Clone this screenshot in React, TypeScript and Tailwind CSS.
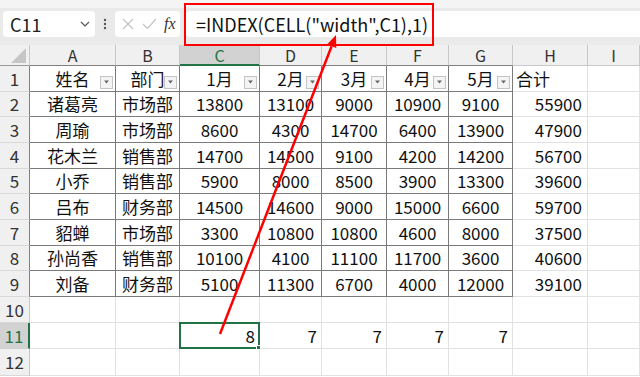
import React from 'react';

const font = { fontFamily: '"Noto Sans CJK SC", "Noto Sans", sans-serif' };

const cols = ['A', 'B', 'C', 'D', 'E', 'F', 'G', 'H', 'I'];
const colWidths = ['w-[86px]', 'w-[64px]', 'w-[80px]', 'w-[62px]', 'w-[65px]', 'w-[62px]', 'w-[64px]', 'w-[75px]', 'flex-1'];

const headerRow = ['姓名', '部门', '1月', '2月', '3月', '4月', '5月', '合计', ''];

const rows: (string | number)[][] = [
  ['诸葛亮', '市场部', 13800, 13100, 9000, 10900, 9100, 55900],
  ['周瑜', '市场部', 8600, 4300, 14700, 6400, 13900, 47900],
  ['花木兰', '销售部', 14700, 14500, 9100, 4200, 14200, 56700],
  ['小乔', '销售部', 5900, 8000, 8500, 3900, 13300, 39600],
  ['吕布', '财务部', 14500, 14600, 9000, 15000, 6600, 59700],
  ['貂蝉', '市场部', 3300, 10800, 10800, 4600, 8000, 37500],
  ['孙尚香', '销售部', 10100, 4100, 11100, 11700, 3600, 40600],
  ['刘备', '财务部', 5100, 11300, 6700, 4000, 12000, 39100],
];

function FilterButton() {
  return (
    <span className="absolute bottom-[2px] right-[2px] flex h-[13px] w-[13px] items-center justify-center border border-[#c4c4c4] bg-[#f4f4f4]">
      <svg width="7" height="4" viewBox="0 0 7 4">
        <path d="M1 0.5 L6 0.5 L3.5 3.5 Z" fill="#666" />
      </svg>
    </span>
  );
}

function RowHeader({ label, selected, dark, height }: { label: string; selected?: boolean; dark?: boolean; height: string }) {
  return (
    <div
      className={
        selected
          ? `flex w-[30px] ${height} items-center justify-center border-r-2 border-b border-r-[#217346] border-b-[#d0d0d0] bg-[#d2d2d2] text-[17px] text-[#217346]`
          : dark
            ? `flex w-[30px] ${height} items-center justify-center border-r border-b border-r-[#7f7f7f] border-b-[#d8d8d8] bg-[#f0f0f0] text-[17px] text-[#333]`
            : `flex w-[30px] ${height} items-center justify-center border-r border-b border-r-[#c8c8c8] border-b-[#d8d8d8] bg-[#f0f0f0] text-[17px] text-[#333]`
      }
    >
      {label}
    </div>
  );
}

function Toolbar() {
  return (
    <div className="h-[45px] bg-[#eaeaea]">
      <div className="h-[8px] bg-[#f4f4f4]" />
      <div className="flex pt-[3px] pl-[3px]">
        <div className="flex h-[26px] w-[92px] items-center justify-between rounded-[4px] bg-white pl-[7px] pr-[5px]">
          <span className="text-[18px] text-[#222]">C11</span>
          <svg width="10" height="6" viewBox="0 0 10 6">
            <path d="M1 1 L5 5 L9 1" fill="none" stroke="#555" strokeWidth="1.2" />
          </svg>
        </div>
        <div className="flex w-[20px] items-center justify-center">
          <svg width="4" height="12" viewBox="0 0 4 12">
            <circle cx="2" cy="2" r="1.2" fill="#555" />
            <circle cx="2" cy="6" r="1.2" fill="#555" />
            <circle cx="2" cy="10" r="1.2" fill="#555" />
          </svg>
        </div>
        <div className="flex h-[26px] w-[65px] items-center gap-[7px] rounded-[4px] bg-white pl-[6px]">
          <svg width="14" height="14" viewBox="0 0 14 14">
            <path d="M2 2 L12 12 M12 2 L2 12" stroke="#c2c2c2" strokeWidth="1.2" />
          </svg>
          <svg width="15" height="14" viewBox="0 0 15 14">
            <path d="M1 7 L5.5 11.5 L14 2" fill="none" stroke="#c2c2c2" strokeWidth="1.2" />
          </svg>
          <span className="text-[16px] italic text-[#333]" style={{ fontFamily: '"Liberation Serif", serif' }}>
            fx
          </span>
        </div>
        <div className="ml-[6px] flex h-[26px] flex-1 items-center rounded-l-[4px] bg-white pl-[10px]">
          <span className="text-[18px] text-[#111]">=INDEX(CELL("width",C1),1)</span>
        </div>
      </div>
    </div>
  );
}

function ColumnHeaders() {
  return (
    <div className="flex h-[21px]">
      <div className="relative w-[30px] border-r border-b border-r-[#c8c8c8] border-b-[#9a9a9a] bg-[#f0f0f0]">
        <svg className="absolute right-[3px] bottom-[2px]" width="15" height="15" viewBox="0 0 15 15">
          <path d="M15 0 L15 15 L0 15 Z" fill="#c6c6c6" />
        </svg>
      </div>
      {cols.map((c, i) => (
        <div
          key={c}
          className={
            c === 'C'
              ? `${colWidths[i]} flex items-center justify-center border-r border-b-2 border-r-[#c8c8c8] border-b-[#217346] bg-[#d2d2d2] text-[16px] text-[#217346]`
              : i < 7
                ? `${colWidths[i]} flex items-center justify-center border-r border-b border-r-[#c8c8c8] border-b-[#7f7f7f] bg-[#f0f0f0] text-[16px] text-[#333]`
                : `${colWidths[i]} flex items-center justify-center border-r border-b border-r-[#c8c8c8] border-b-[#c8c8c8] bg-[#f0f0f0] text-[16px] text-[#333]`
          }
        >
          {c}
        </div>
      ))}
    </div>
  );
}

const darkCell = 'border-r border-b border-[#7a7a7a]';
const lightCell = 'border-r border-b border-[#e1e1e1]';

function HeaderDataRow() {
  return (
    <div className="flex h-[25.67px]">
      <RowHeader label="1" dark height="h-[25.67px]" />
      {headerRow.map((t, i) => (
        <div
          key={i}
          className={
            i < 7
              ? `${colWidths[i]} relative flex items-center justify-center ${darkCell}`
              : i === 7
                ? `${colWidths[i]} flex items-center pl-[3px] ${lightCell}`
                : `${colWidths[i]} ${lightCell}`
          }
        >
          {t}
          {i < 7 && <FilterButton />}
        </div>
      ))}
    </div>
  );
}

function DataRow({ n, values }: { n: number; values: (string | number)[] }) {
  return (
    <div className="flex h-[25.67px]">
      <RowHeader label={String(n)} dark height="h-[25.67px]" />
      {values.map((v, i) => (
        <div
          key={i}
          className={
            i < 7
              ? `${colWidths[i]} flex items-center justify-center ${darkCell}`
              : `${colWidths[i]} flex items-center justify-end pr-[5px] ${lightCell}`
          }
        >
          {v}
        </div>
      ))}
      <div className={`${colWidths[8]} ${lightCell}`} />
    </div>
  );
}

function EmptyRow({ n, height }: { n: number; height: string }) {
  return (
    <div className={`flex ${height}`}>
      <RowHeader label={String(n)} height={height} />
      {colWidths.map((w, i) => (
        <div key={i} className={`${w} ${lightCell}`} />
      ))}
    </div>
  );
}

function ResultRow() {
  const vals = ['', '', '8', '7', '7', '7', '7', '', ''];
  return (
    <div className="flex h-[26px]">
      <RowHeader label="11" selected height="h-[26px]" />
      {vals.map((v, i) => (
        <div key={i} className={`${colWidths[i]} relative flex items-center justify-end pr-[4px] ${lightCell}`}>
          {v}
          {i === 2 && (
            <span className="absolute -top-[1px] -left-[1px] -right-[1px] -bottom-[1px] border-2 border-[#217346]">
              <span className="absolute -right-[3px] -bottom-[3px] h-[5px] w-[5px] border border-white bg-[#217346]" />
            </span>
          )}
        </div>
      ))}
    </div>
  );
}

export default function App() {
  return (
    <div className="relative h-[377px] w-[640px] overflow-hidden bg-white text-[17px] text-[#111]" style={font}>
      <Toolbar />
      <ColumnHeaders />
      <HeaderDataRow />
      {rows.map((r, i) => (
        <DataRow key={i} n={i + 2} values={r} />
      ))}
      <EmptyRow n={10} height="h-[26px]" />
      <ResultRow />
      <EmptyRow n={12} height="h-[27px]" />

      <div className="pointer-events-none absolute top-[3px] left-[184px] h-[43px] w-[250px] border-2 border-[#ff0000]" />
      <svg className="pointer-events-none absolute top-0 left-0" width="640" height="377">
        <line x1="220" y1="334" x2="331.6" y2="46.2" stroke="#ff0000" strokeWidth="2.5" />
        <polygon points="336,35 336.3,48 327,44.4" fill="#ff0000" />
      </svg>
    </div>
  );
}
